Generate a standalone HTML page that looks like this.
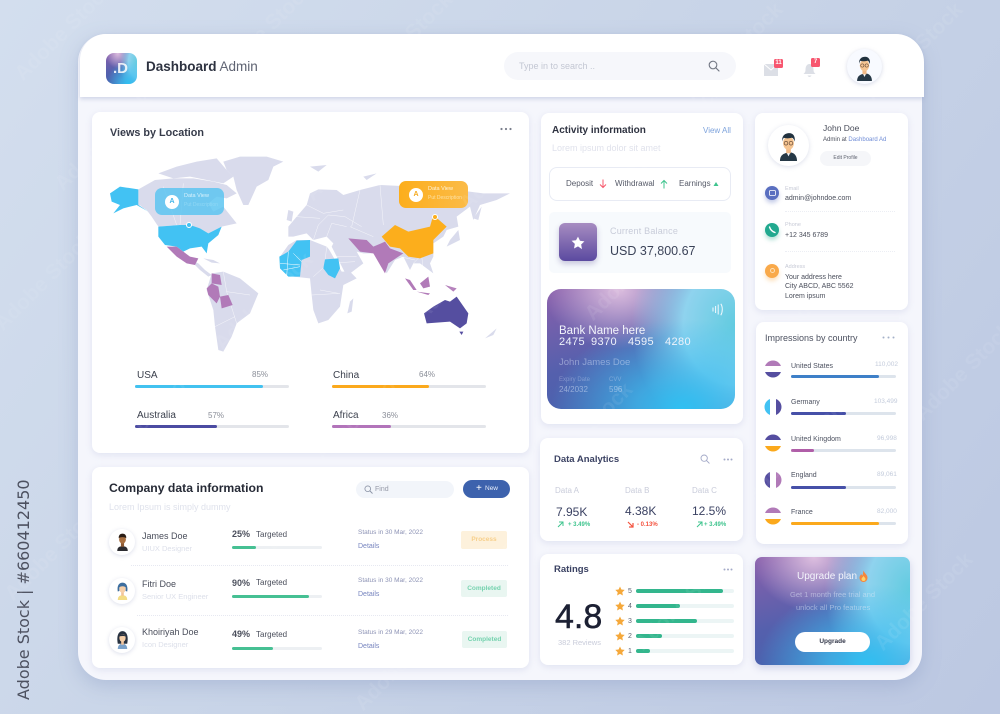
<!DOCTYPE html>
<html><head><meta charset="utf-8"><title>Dashboard Admin</title>
<style>
*{box-sizing:border-box}
html,body{margin:0;padding:0;width:1000px;height:714px;overflow:hidden}
body{position:relative;font-family:"Liberation Sans",sans-serif}
#root{position:absolute;left:0;top:0;width:1000px;height:714px;overflow:hidden;background:linear-gradient(125deg,#d3deee 0%,#c9d5e8 45%,#bcc8e2 100%)}
.a{position:absolute}
.t{position:absolute;white-space:nowrap;line-height:1}
.card{position:absolute;background:#fff;border-radius:8px;box-shadow:0 2px 7px rgba(150,160,205,.22)}
.bar{position:absolute;border-radius:3px}
.g{background:radial-gradient(ellipse 70% 75% at 72% 100%,#2fc0f2 0%,rgba(60,190,240,.75) 35%,rgba(80,180,235,0) 100%),radial-gradient(ellipse 55% 100% at 100% 30%,#62cbe0 0%,#8fd3ee 50%,rgba(130,195,235,0) 100%),radial-gradient(ellipse 40% 50% at 38% 0%,rgba(226,196,226,.95),rgba(226,196,226,0) 100%),linear-gradient(165deg,#8a5fab 0%,#5560ad 50%,#3f63af 100%)}
.wm{position:absolute;color:rgba(255,255,255,.075);font:bold 21px "Liberation Sans",sans-serif;transform:rotate(-45deg);white-space:nowrap}
</style></head><body><div id="root">

<svg width="0" height="0" style="position:absolute"><defs>
<symbol id="man" viewBox="0 0 40 40">
<path d="M9 40c0-8 5-10 11-11s11 3 11 11z" fill="#263846"/><path d="M17 28h6l-3 6z" fill="#f4f6fa"/><rect x="17" y="22" width="6" height="8" fill="#f1b987"/>
<ellipse cx="20" cy="17" rx="7" ry="8.500" fill="#f6c592"/><path d="M12 15c-1-8 4-11 9-11s8 4 7 11c-1-3-2-5-4-5-3 1-8 1-10 0-1 1-2 3-2 5z" fill="#22323f"/>
<circle cx="16.800" cy="17" r="2.400" fill="none" stroke="#5a4030" stroke-width=".8"/><circle cx="23.200" cy="17" r="2.400" fill="none" stroke="#5a4030" stroke-width=".8"/></symbol>
<symbol id="james" viewBox="0 0 40 40">
<path d="M10 38c0-7 4-9 10-9s10 2 10 9z" fill="#2b2b30"/><rect x="17" y="22" width="6" height="8" fill="#8c5a34"/><ellipse cx="20" cy="16" rx="6.500" ry="8" fill="#a86f40"/><path d="M13 14c-1-6 3-9 7-9s8 3 7 9c-2-3-12-3-14 0z" fill="#2a1d15"/></symbol>
<symbol id="fitri" viewBox="0 0 40 40">
<path d="M11 38c0-7 4-9 9-9s9 2 9 9z" fill="#f3dc85"/><rect x="17.500" y="22" width="5" height="8" fill="#f2c49a"/><path d="M11 22c-2-12 3-17 9-17s11 5 9 17l-3-1v-8H14v8z" fill="#3d6e9f"/><ellipse cx="20" cy="17" rx="6" ry="7.500" fill="#f6cfa8"/><path d="M13 15c0-6 4-9 7-9s7 3 7 9c-3-4-11-4-14 0z" fill="#3d6e9f"/></symbol>
<symbol id="khoir" viewBox="0 0 40 40">
<path d="M11 28c-3-16 2-24 9-24s12 8 9 24z" fill="#283240"/><path d="M11 38c0-7 4-10 9-10s9 3 9 10z" fill="#7aa1c9"/><rect x="17.500" y="22" width="5" height="8" fill="#f0c39c"/><ellipse cx="20" cy="17" rx="6" ry="7.500" fill="#f6cfa8"/><path d="M14 14c2-5 8-6 12 0-3-1-8-1-12 0z" fill="#283240"/></symbol>
<symbol id="s" viewBox="0 0 12 12"><circle cx="5" cy="5" r="3.800" fill="none" stroke="currentColor" stroke-width="1.100"/><path d="M8 8l3 3" stroke="currentColor" stroke-width="1.200" stroke-linecap="round"/></symbol>
</defs></svg>

<!-- outer panel -->
<div class="a" style="left:78px;top:34px;width:844px;height:646px;border-radius:28px;background:#f5f6fc;box-shadow:0 6px 18px rgba(130,145,190,.35)"></div>
<!-- header -->
<div class="a" style="left:80px;top:34px;width:844px;height:63px;background:#fff;border-radius:26px 28px 0 0;box-shadow:0 2px 4px rgba(150,160,200,.4)"></div>
<div class="a g" style="left:106px;top:53px;width:31px;height:31px;border-radius:8px"></div>
<div class="t" style="left:113px;top:61px;font-size:15px;font-weight:bold;color:#fff;opacity:.85">.D</div>
<div class="t" style="left:146px;top:60px;font-size:13.500px;color:#3a3f4d"><b style="color:#2d3240">Dashboard</b> <span style="color:#5c6170">Admin</span></div>
<div class="a" style="left:504px;top:52px;width:232px;height:28px;border-radius:14px;background:#f6f7fb"></div>
<div class="t" style="left:519px;top:61.500px;font-size:9px;color:#c3c7d3">Type in to search ..</div>
<svg class="a" style="left:708px;top:60px;color:#6f7480" width="12" height="12"><use href="#s"/></svg>
<svg class="a" style="left:764px;top:63px" width="14" height="14"><path d="M0 1h14v12H0z" fill="#dcdfe6"/><path d="M0 1l7 6 7-6" fill="none" stroke="#fff" stroke-width="1"/></svg>
<div class="a" style="left:774px;top:59px;width:9px;height:9px;background:#f7566f;border-radius:1.500px;color:#fff;font-size:6px;line-height:9px;text-align:center;font-weight:bold">11</div>
<svg class="a" style="left:803px;top:63px" width="13" height="15"><path d="M6.500 1c3 0 4 3 4 6 0 2 1 3 2 4H0.500c1-1 2-2 2-4 0-3 1-6 4-6z" fill="#dcdfe6"/><path d="M4.500 12.500c1 2 3 2 4 0z" fill="#dcdfe6"/></svg>
<div class="a" style="left:811px;top:58px;width:9px;height:9px;background:#f7566f;border-radius:1.500px;color:#fff;font-size:6px;line-height:9px;text-align:center;font-weight:bold">7</div>
<div class="a" style="left:847px;top:49px;width:35px;height:35px;border-radius:50%;background:#f8faff;box-shadow:0 1px 4px rgba(140,150,190,.35)"></div>
<svg class="a" style="left:851px;top:54px" width="27" height="27"><use href="#man"/></svg>

<!-- Views by location -->
<div class="card" style="left:92px;top:112px;width:437px;height:341px"></div>
<div class="t" style="left:110px;top:127.500px;font-size:10.800px;font-weight:bold;color:#363b4a">Views by Location</div>
<svg class="a" style="left:500px;top:127px" width="12" height="4"><circle cx="1.500" cy="2" r="1.100" fill="#7a7f8c"/><circle cx="6" cy="2" r="1.100" fill="#7a7f8c"/><circle cx="10.500" cy="2" r="1.100" fill="#7a7f8c"/></svg>

<svg class="a" style="left:0;top:0" width="1000" height="714">
<g transform="translate(80,30) scale(.33333)">
<g fill="#d9dbec">
<polygon points="430,395 480,380 560,380 610,395 580,410 565,450 530,470 505,525 490,525 470,480 460,440 440,420"/>
<polygon points="235,430 290,410 350,395 410,385 440,420 460,440 430,460 380,450 330,440 280,445"/>
<polygon points="175,478 225,450 280,445 340,445 400,455 440,465 470,490 440,505 410,500 385,520 400,545 430,530 470,580 425,590 385,610 360,595 300,585 235,590 215,560 200,540 175,525"/>
<polygon points="330,690 355,700 375,720 395,735 385,740 360,720"/>
<polygon points="370,685 400,690 420,700 395,698"/>
<polygon points="395,730 430,725 480,745 535,790 510,850 470,880 455,920 430,965 415,960 405,890 400,840 380,780"/>
<polygon points="600,680 625,645 650,630 690,630 740,650 747,658 785,725 810,725 830,745 790,765 780,830 745,870 715,880 700,840 695,795 690,745 640,740 600,715"/>
<polygon points="810,815 820,805 815,845 802,850"/>
<polygon points="625,620 625,590 650,560 680,525 690,490 715,478 770,480 790,495 840,480 900,465 1000,470 1060,480 1130,480 1210,490 1290,490 1250,510 1200,525 1180,570 1170,530 1130,560 1135,590 1100,600 1090,620 1060,640 1060,680 1050,700 1060,730 1020,700 1000,700 990,720 970,680 945,690 920,730 900,690 880,670 850,670 830,665 850,700 800,738 755,650 760,640 740,620 700,630 680,610 640,620"/>
<polygon points="625,540 640,545 635,575 620,570"/>
<polygon points="1110,630 1135,600 1140,630 1100,650"/>
<polygon points="1215,925 1250,895 1240,915"/>
<polygon points="690,410 740,405 715,425"/>
<polygon points="850,440 890,430 860,450"/>
<polygon points="1180,565 1205,530 1195,570"/>
</g>
<g fill="none" stroke="#fff" stroke-width="1.500" opacity=".75">
<path d="M700 630l15-45 30-30 50 5 50 30M740 620l15-40 45 10M650 560l70 5M680 525l50 25 60-10M840 480l-25 110M900 465l10 120M810 590l70 30"/>
<path d="M700 740l45-40 80-5M720 780l55 10M695 795l85-5M740 650l-5 45M430 725l10 60 70 10M405 890l60-30M440 785l30 95M180 525l55 65M300 585l10-125M250 470l40 115"/>
<path d="M1000 700l25-25 5 50M960 680l45 10M770 680l60 0"/>
</g>
<polygon fill="#42c2f3" points="90,490 120,470 175,478 175,525 205,545 170,525 130,535 100,550 120,525 95,515"/>
<polygon fill="#42c2f3" points="235,590 300,585 330,585 360,595 385,610 425,590 415,615 385,640 380,670 365,650 330,655 310,665 290,650 255,645 235,620"/>
<polygon fill="#b17ab8" points="260,650 290,650 310,665 330,680 355,685 345,705 320,700 290,680"/>
<g fill="#b17ab8"><polygon points="395,730 420,735 425,765 395,760"/><polygon points="380,775 395,760 415,770 420,800 410,820 385,795"/><polygon points="420,800 445,795 458,825 425,835"/></g>
<polygon fill="#42c2f3" points="598,680 625,665 650,632 690,630 690,680 665,690 660,740 625,740 600,715"/>
<path d="M600 700l60 5M625 665l-5 75M640 670l25 25M610 720l50-10" fill="none" stroke="#fff" stroke-width="1.500"/>
<polygon fill="#42c2f3" points="735,688 775,685 780,715 765,745 745,735 730,715"/>
<polygon fill="#fcae1c" points="905,620 945,585 985,605 1050,590 1060,555 1100,590 1060,630 1060,670 1020,685 985,680 960,655 930,650"/>
<polygon fill="#b17ab8" points="805,625 860,630 880,650 915,635 930,655 970,670 925,700 915,730 880,670 840,665"/>
<g fill="#b17ab8"><polygon points="975,745 990,750 1010,780 1000,780"/><polygon points="1020,760 1045,740 1050,770 1030,775"/><polygon points="1010,785 1050,790 1045,795"/><polygon points="1095,765 1130,775 1120,785"/></g>
<polygon fill="#554ea0" points="1032,850 1060,830 1095,810 1110,815 1130,800 1165,850 1160,880 1140,895 1110,875 1040,880"/>
<polygon fill="#554ea0" points="1138,905 1150,905 1145,915"/>
</g>
</svg>

<div class="a" style="left:155px;top:188px;width:69px;height:27px;border-radius:7px;background:rgba(88,195,240,.82)"></div>
<div class="a" style="left:165px;top:195px;width:14px;height:14px;border-radius:50%;background:#fff;color:#42b5e8;font-size:7px;font-weight:bold;line-height:14px;text-align:center">A</div>
<div class="t" style="left:184px;top:194px;font-size:5.500px;color:#d8f1fc">Data View</div>
<div class="t" style="left:184px;top:203px;font-size:5px;color:#8fd7f5">Put Description</div>
<div class="a" style="left:186px;top:222px;width:6px;height:6px;border-radius:50%;background:#42c2f3;border:1.500px solid #fff"></div>
<div class="a" style="left:399px;top:181px;width:69px;height:27px;border-radius:7px;background:linear-gradient(90deg,#fcae1c,#fbbb48)"></div>
<div class="a" style="left:409px;top:188px;width:14px;height:14px;border-radius:50%;background:#fff;color:#f5a81c;font-size:7px;font-weight:bold;line-height:14px;text-align:center">A</div>
<div class="t" style="left:428px;top:187px;font-size:5.500px;color:#fff3d8">Data View</div>
<div class="t" style="left:428px;top:196px;font-size:5px;color:#fde0a2">Put Description</div>
<div class="a" style="left:432px;top:214px;width:6px;height:6px;border-radius:50%;background:#fcae1c;border:1.500px solid #fff"></div>

<div class="t" style="left:137px;top:371px;font-size:10px;color:#3a3f4c">USA</div>
<div class="t" style="left:252px;top:371px;font-size:8px;color:#8a8e98">85%</div>
<div class="bar" style="left:135px;top:385px;width:154px;height:3px;background:#e3e5ea"></div><div class="bar" style="left:135px;top:385px;width:128px;height:3px;background:#42c2f0"></div>
<div class="t" style="left:333px;top:371px;font-size:10px;color:#3a3f4c">China</div>
<div class="t" style="left:419px;top:371px;font-size:8px;color:#8a8e98">64%</div>
<div class="bar" style="left:332px;top:385px;width:154px;height:3px;background:#e3e5ea"></div><div class="bar" style="left:332px;top:385px;width:97px;height:3px;background:#fba91c"></div>
<div class="t" style="left:137px;top:411px;font-size:10px;color:#3a3f4c">Australia</div>
<div class="t" style="left:208px;top:412px;font-size:8px;color:#8a8e98">57%</div>
<div class="bar" style="left:135px;top:425px;width:154px;height:3px;background:#e3e5ea"></div><div class="bar" style="left:135px;top:425px;width:82px;height:3px;background:#4b4ba2"></div>
<div class="t" style="left:333px;top:411px;font-size:10px;color:#3a3f4c">Africa</div>
<div class="t" style="left:382px;top:412px;font-size:8px;color:#8a8e98">36%</div>
<div class="bar" style="left:332px;top:425px;width:154px;height:3px;background:#e3e5ea"></div><div class="bar" style="left:332px;top:425px;width:59px;height:3px;background:#b274ba"></div>

<!-- Company -->
<div class="card" style="left:92px;top:467px;width:437px;height:201px"></div>
<div class="t" style="left:109px;top:482px;font-size:12.200px;font-weight:bold;color:#262a36">Company data information</div>
<div class="t" style="left:109px;top:503px;font-size:9px;color:#dfe2ec">Lorem Ipsum is simply dummy</div>
<div class="a" style="left:356px;top:481px;width:98px;height:17px;border-radius:9px;background:#f2f5fa"></div>
<svg class="a" style="left:364px;top:485px;color:#8b93a5" width="9" height="9" viewBox="0 0 12 12"><use href="#s"/></svg>
<div class="t" style="left:375px;top:486px;font-size:7px;color:#969aa8">Find</div>
<div class="a" style="left:463px;top:480px;width:47px;height:18px;border-radius:9px;background:#3d62ad"></div>
<div class="t" style="left:476px;top:483.500px;font-size:10px;color:#fff">+</div>
<div class="t" style="left:485px;top:486px;font-size:6.500px;color:#e8eefa">New</div>

<div class="a" style="left:109px;top:529px;width:26px;height:26px;border-radius:50%;background:#fff;box-shadow:0 1px 4px rgba(140,150,190,.3)"></div>
<svg class="a" style="left:112px;top:531px" width="21" height="21"><use href="#james"/></svg>
<div class="t" style="left:142px;top:531.500px;font-size:9px;color:#4a4e5b">James Doe</div>
<div class="t" style="left:142px;top:544.500px;font-size:7.500px;color:#dde0ea">UIUX Designer</div>
<div class="t" style="left:232px;top:530px;font-size:9px;font-weight:bold;color:#4a4e5b">25%</div>
<div class="t" style="left:256px;top:530.500px;font-size:8px;color:#4a4e5b">Targeted</div>
<div class="bar" style="left:232px;top:546px;width:90px;height:3px;background:#edf0f3"></div><div class="bar" style="left:232px;top:546px;width:24px;height:3px;background:#46c093"></div>
<div class="t" style="left:358px;top:530px;font-size:6.500px;color:#8d93b5">Status in 30 Mar, 2022</div>
<div class="t" style="left:358px;top:542.500px;font-size:7px;color:#7785bf">Details</div>
<div class="a" style="left:461px;top:531px;width:46px;height:18px;border-radius:2px;background:#fdf1dc;color:#f7cf8a;font-size:6.500px;line-height:18px;text-align:center;font-weight:bold">Process</div>
<div class="a" style="left:131px;top:565px;width:377px;border-top:1px dotted #e6e8f1"></div>

<div class="a" style="left:109px;top:578px;width:26px;height:26px;border-radius:50%;background:#fff;box-shadow:0 1px 4px rgba(140,150,190,.3)"></div>
<svg class="a" style="left:112px;top:580px" width="21" height="21"><use href="#fitri"/></svg>
<div class="t" style="left:142px;top:579.500px;font-size:9px;color:#4a4e5b">Fitri Doe</div>
<div class="t" style="left:142px;top:592.500px;font-size:7.500px;color:#dde0ea">Senior UX Engineer</div>
<div class="t" style="left:232px;top:578.500px;font-size:9px;font-weight:bold;color:#4a4e5b">90%</div>
<div class="t" style="left:256px;top:579px;font-size:8px;color:#4a4e5b">Targeted</div>
<div class="bar" style="left:232px;top:595px;width:90px;height:3px;background:#edf0f3"></div><div class="bar" style="left:232px;top:595px;width:77px;height:3px;background:#46c093"></div>
<div class="t" style="left:358px;top:578px;font-size:6.500px;color:#8d93b5">Status in 30 Mar, 2022</div>
<div class="t" style="left:358px;top:590.500px;font-size:7px;color:#7785bf">Details</div>
<div class="a" style="left:461px;top:580px;width:46px;height:17px;border-radius:2px;background:#e9f6f1;color:#74d2ae;font-size:6.500px;line-height:17px;text-align:center;font-weight:bold">Completed</div>
<div class="a" style="left:137px;top:615px;width:371px;border-top:1px dotted #e6e8f1"></div>

<div class="a" style="left:109px;top:627px;width:26px;height:26px;border-radius:50%;background:#fff;box-shadow:0 1px 4px rgba(140,150,190,.3)"></div>
<svg class="a" style="left:112px;top:629px" width="21" height="21"><use href="#khoir"/></svg>
<div class="t" style="left:142px;top:628px;font-size:9px;color:#4a4e5b">Khoiriyah Doe</div>
<div class="t" style="left:142px;top:641px;font-size:7.500px;color:#dde0ea">Icon Designer</div>
<div class="t" style="left:232px;top:630px;font-size:9px;font-weight:bold;color:#4a4e5b">49%</div>
<div class="t" style="left:256px;top:630.500px;font-size:8px;color:#4a4e5b">Targeted</div>
<div class="bar" style="left:232px;top:647px;width:90px;height:3px;background:#edf0f3"></div><div class="bar" style="left:232px;top:647px;width:41px;height:3px;background:#46c093"></div>
<div class="t" style="left:358px;top:630px;font-size:6.500px;color:#8d93b5">Status in 29 Mar, 2022</div>
<div class="t" style="left:358px;top:642.500px;font-size:7px;color:#7785bf">Details</div>
<div class="a" style="left:462px;top:631px;width:45px;height:17px;border-radius:2px;background:#e9f6f1;color:#74d2ae;font-size:6.500px;line-height:17px;text-align:center;font-weight:bold">Completed</div>

<!-- Activity -->
<div class="card" style="left:541px;top:113px;width:202px;height:311px"></div>
<div class="t" style="left:552px;top:126px;font-size:10px;font-weight:bold;color:#2e3240">Activity information</div>
<div class="t" style="left:703px;top:127px;font-size:8px;color:#7ea3dc">View All</div>
<div class="t" style="left:552px;top:144px;font-size:9px;color:#e0e2ec">Lorem ipsum dolor sit amet</div>
<div class="a" style="left:549px;top:167px;width:182px;height:34px;border-radius:8px;border:1px solid #e8ebf4;background:#fff"></div>
<div class="t" style="left:566px;top:180px;font-size:8px;color:#565a68">Deposit</div>
<svg class="a" style="left:599px;top:179px" width="8" height="10"><path d="M4 .5v8M1 5.500l3 3 3-3" fill="none" stroke="#f7586c" stroke-width="1"/></svg>
<div class="t" style="left:615px;top:180px;font-size:8px;color:#565a68">Withdrawal</div>
<svg class="a" style="left:660px;top:179px" width="8" height="10"><path d="M4 9.500v-8M1 4.500l3-3 3 3" fill="none" stroke="#3fc48e" stroke-width="1"/></svg>
<div class="t" style="left:679px;top:180px;font-size:8px;color:#565a68">Earnings</div>
<svg class="a" style="left:713px;top:181px" width="6" height="6"><path d="M3 1l2.500 4h-5z" fill="#3fc48e"/></svg>
<div class="a" style="left:549px;top:212px;width:182px;height:61px;border-radius:5px;background:#f7fafd"></div>
<div class="a" style="left:559px;top:223px;width:38px;height:38px;border-radius:6px;background:linear-gradient(180deg,#a78cc1,#5b4aa0);box-shadow:0 3px 6px rgba(90,80,150,.3)"></div>
<svg class="a" style="left:571px;top:236px" width="14" height="14" viewBox="0 0 24 24"><path d="M12 1l3.400 7.200 7.600 1-5.600 5.400 1.400 7.800L12 17.700l-6.800 3.700 1.400-7.800L1 8.200l7.600-1z" fill="#fff"/></svg>
<div class="t" style="left:610px;top:226.500px;font-size:9px;color:#c8ccd9;letter-spacing:.2px">Current Balance</div>
<div class="t" style="left:610px;top:245px;font-size:12.500px;color:#3a4258">USD 37,800.67</div>

<div class="a g" style="left:547px;top:289px;width:188px;height:120px;border-radius:14px"></div>
<svg class="a" style="left:712px;top:303px" width="12" height="13"><path d="M1 4.500v4M3.600 3v7M6.200 1.500v10M8.800 .8c2 3 2 8 0 11.400" fill="none" stroke="#f2f8fd" stroke-width="1"/></svg>
<div class="t" style="left:559px;top:325.500px;font-size:11.500px;color:#f2f4fb">Bank Name here</div>
<div class="t" style="left:559px;top:337px;font-size:11px;color:#eef3fb;letter-spacing:.4px">2475</div>
<div class="t" style="left:591px;top:337px;font-size:11px;color:#eef3fb;letter-spacing:.4px">9370</div>
<div class="t" style="left:628px;top:337px;font-size:11px;color:#eef3fb;letter-spacing:.4px">4595</div>
<div class="t" style="left:665px;top:337px;font-size:11px;color:#eef3fb;letter-spacing:.4px">4280</div>
<div class="t" style="left:559px;top:358px;font-size:9.500px;color:rgba(220,230,250,.45)">John James Doe</div>
<div class="t" style="left:559px;top:377px;font-size:6px;color:rgba(220,230,250,.35)">Expiry Date</div>
<div class="t" style="left:609px;top:377px;font-size:6px;color:rgba(220,230,250,.35)">CVV</div>
<div class="t" style="left:559px;top:386px;font-size:8px;color:rgba(220,230,250,.5)">24/2032</div>
<div class="t" style="left:609px;top:386px;font-size:8px;color:rgba(220,230,250,.5)">596</div>

<!-- Data analytics -->
<div class="card" style="left:540px;top:438px;width:203px;height:103px"></div>
<div class="t" style="left:554px;top:455px;font-size:9.500px;font-weight:bold;color:#3a4162">Data Analytics</div>
<svg class="a" style="left:700px;top:454px;color:#a4aac8" width="10" height="10" viewBox="0 0 12 12"><use href="#s"/></svg>
<svg class="a" style="left:723px;top:458px" width="10" height="3"><circle cx="1.500" cy="1.500" r="1" fill="#a4aac8"/><circle cx="5" cy="1.500" r="1" fill="#a4aac8"/><circle cx="8.500" cy="1.500" r="1" fill="#a4aac8"/></svg>
<div class="t" style="left:555px;top:487px;font-size:8px;color:#c9ccda">Data A</div>
<div class="t" style="left:625px;top:487px;font-size:8px;color:#c9ccda">Data B</div>
<div class="t" style="left:692px;top:487px;font-size:8px;color:#c9ccda">Data C</div>
<div class="t" style="left:556px;top:506px;font-size:12px;color:#3a4162">7.95K</div>
<div class="t" style="left:625px;top:505px;font-size:12px;color:#3a4162">4.38K</div>
<div class="t" style="left:692px;top:505px;font-size:12px;color:#3a4162">12.5%</div>
<svg class="a" style="left:557px;top:521px" width="7" height="7"><path d="M1 6l5-5M2 1h4v4" fill="none" stroke="#3fc48e" stroke-width="1"/></svg>
<div class="t" style="left:568px;top:522px;font-size:6px;color:#3fc48e;font-weight:bold">+ 3.49%</div>
<svg class="a" style="left:627px;top:521px" width="7" height="7"><path d="M1 1l5 5M6 2v4H2" fill="none" stroke="#f4523e" stroke-width="1.200"/></svg>
<div class="t" style="left:637px;top:522px;font-size:6px;color:#f4523e;font-weight:bold">- 0.13%</div>
<svg class="a" style="left:696px;top:521px" width="7" height="7"><path d="M1 6l5-5M2 1h4v4" fill="none" stroke="#3fc48e" stroke-width="1"/></svg>
<div class="t" style="left:704px;top:522px;font-size:6px;color:#3fc48e;font-weight:bold">+ 3.49%</div>

<!-- Ratings -->
<div class="card" style="left:540px;top:554px;width:203px;height:111px"></div>
<div class="t" style="left:554px;top:565px;font-size:9.500px;font-weight:bold;color:#3a4162">Ratings</div>
<svg class="a" style="left:723px;top:568px" width="10" height="3"><circle cx="1.500" cy="1.500" r="1" fill="#a4aac8"/><circle cx="5" cy="1.500" r="1" fill="#a4aac8"/><circle cx="8.500" cy="1.500" r="1" fill="#a4aac8"/></svg>
<div class="t" style="left:555px;top:600px;font-size:34px;color:#1c2033;-webkit-text-stroke:.5px #1c2033">4.8</div>
<div class="t" style="left:558px;top:639px;font-size:7.500px;color:#c9ccda">382 Reviews</div>
<svg class="a" style="left:614px;top:585px" width="12" height="72" viewBox="0 0 12 72"><g fill="#f5a83a"><path d="M6 1.500l1.400 3 3.300.4-2.400 2.300.6 3.300-2.900-1.600-2.900 1.600.6-3.300L1.300 4.900l3.300-.4z"/><path transform="translate(0,15)" d="M6 1.500l1.400 3 3.300.4-2.400 2.300.6 3.300-2.900-1.600-2.900 1.600.6-3.300L1.300 4.900l3.300-.4z"/><path transform="translate(0,30)" d="M6 1.500l1.400 3 3.300.4-2.400 2.300.6 3.300-2.900-1.600-2.900 1.600.6-3.300L1.300 4.900l3.300-.4z"/><path transform="translate(0,45)" d="M6 1.500l1.400 3 3.300.4-2.400 2.300.6 3.300-2.900-1.600-2.900 1.600.6-3.300L1.300 4.900l3.300-.4z"/><path transform="translate(0,60)" d="M6 1.500l1.400 3 3.300.4-2.400 2.300.6 3.300-2.900-1.600-2.900 1.600.6-3.300L1.300 4.900l3.300-.4z"/></g></svg>
<div class="t" style="left:628px;top:587.500px;font-size:7px;color:#5d6170">5</div>
<div class="t" style="left:628px;top:602.500px;font-size:7px;color:#5d6170">4</div>
<div class="t" style="left:628px;top:617.500px;font-size:7px;color:#5d6170">3</div>
<div class="t" style="left:628px;top:632.500px;font-size:7px;color:#5d6170">2</div>
<div class="t" style="left:628px;top:647.500px;font-size:7px;color:#5d6170">1</div>
<div class="bar" style="left:636px;top:589px;width:98px;height:4px;background:#ecf5f5"></div><div class="bar" style="left:636px;top:589px;width:87px;height:4px;background:#33b68d"></div>
<div class="bar" style="left:636px;top:604px;width:98px;height:4px;background:#ecf5f5"></div><div class="bar" style="left:636px;top:604px;width:44px;height:4px;background:#33b68d"></div>
<div class="bar" style="left:636px;top:619px;width:98px;height:4px;background:#ecf5f5"></div><div class="bar" style="left:636px;top:619px;width:61px;height:4px;background:#33b68d"></div>
<div class="bar" style="left:636px;top:634px;width:98px;height:4px;background:#ecf5f5"></div><div class="bar" style="left:636px;top:634px;width:26px;height:4px;background:#33b68d"></div>
<div class="bar" style="left:636px;top:649px;width:98px;height:4px;background:#ecf5f5"></div><div class="bar" style="left:636px;top:649px;width:14px;height:4px;background:#33b68d"></div>

<!-- Profile -->
<div class="card" style="left:755px;top:113px;width:153px;height:197px"></div>
<div class="a" style="left:768px;top:125px;width:41px;height:41px;border-radius:50%;background:#fff;box-shadow:0 1px 5px rgba(140,150,190,.3)"></div>
<svg class="a" style="left:773px;top:130px" width="31" height="31"><use href="#man"/></svg>
<div class="t" style="left:823px;top:123.500px;font-size:8.500px;color:#4a4e5b">John Doe</div>
<div class="t" style="left:823px;top:136.500px;font-size:6px;color:#4a4e5b">Admin at <span style="color:#6f8cd6">Dashboard Ad</span></div>
<div class="a" style="left:820px;top:151px;width:51px;height:15px;border-radius:8px;background:#f5f6f9;color:#5f6370;font-size:5px;line-height:15px;text-align:center">Edit Profile</div>

<div class="a" style="left:765px;top:186px;width:14px;height:14px;border-radius:50%;background:#5a6fc0;box-shadow:0 3px 4px rgba(90,110,190,.35)"></div>
<svg class="a" style="left:768.500px;top:190px" width="7" height="6"><rect x=".5" y=".5" width="6" height="5" rx="1" fill="none" stroke="#fff" stroke-width=".8"/></svg>
<div class="t" style="left:785px;top:186.500px;font-size:5.500px;color:#c7cad6">Email</div>
<div class="t" style="left:785px;top:194.500px;font-size:7px;color:#4a4e5b">admin@johndoe.com</div>
<div class="a" style="left:785px;top:211px;width:110px;border-top:1px dotted #eceef4"></div>
<div class="a" style="left:765px;top:223px;width:14px;height:14px;border-radius:50%;background:#22a98f;box-shadow:0 3px 4px rgba(40,170,140,.35)"></div>
<svg class="a" style="left:768px;top:226px" width="8" height="8"><path d="M1.500 1c1 3 2.500 4.500 5.500 5.500" fill="none" stroke="#fff" stroke-width="1.400" stroke-linecap="round"/></svg>
<div class="t" style="left:785px;top:223px;font-size:5.500px;color:#c7cad6">Phone</div>
<div class="t" style="left:785px;top:231.500px;font-size:7px;color:#4a4e5b">+12 345 6789</div>
<div class="a" style="left:785px;top:251px;width:110px;border-top:1px dotted #eceef4"></div>
<div class="a" style="left:765px;top:264px;width:14px;height:14px;border-radius:50%;background:#f9a94a;box-shadow:0 3px 4px rgba(250,170,70,.35)"></div>
<div class="a" style="left:769.500px;top:268px;width:5px;height:5px;border-radius:50%;border:1px solid #fde1b8"></div>
<div class="t" style="left:785px;top:264.500px;font-size:5.500px;color:#c7cad6">Address</div>
<div class="t" style="left:785px;top:273.500px;font-size:7px;color:#4a4e5b">Your address here</div>
<div class="t" style="left:785px;top:283px;font-size:7px;color:#4a4e5b">City ABCD, ABC 5562</div>
<div class="t" style="left:785px;top:292.500px;font-size:7px;color:#4a4e5b">Lorem ipsum</div>

<!-- Impressions -->
<div class="card" style="left:756px;top:322px;width:152px;height:222px"></div>
<div class="t" style="left:765px;top:333.500px;font-size:9px;color:#4c5160">Impressions by country</div>
<svg class="a" style="left:882px;top:336px" width="13" height="3"><circle cx="1.500" cy="1.500" r="1" fill="#a4b0c8"/><circle cx="6.500" cy="1.500" r="1" fill="#a4b0c8"/><circle cx="11.500" cy="1.500" r="1" fill="#a4b0c8"/></svg>

<svg class="a" style="left:764px;top:360px" width="18" height="18"><defs><clipPath id="c"><circle cx="9" cy="9" r="8.500"/></clipPath></defs><g clip-path="url(#c)"><rect width="18" height="18" fill="#fff"/><rect width="18" height="6" fill="#b17ab8"/><rect y="12" width="18" height="6" fill="#554ea0"/></g></svg>
<svg class="a" style="left:764px;top:398px" width="18" height="18"><g clip-path="url(#c)"><rect width="18" height="18" fill="#fff"/><rect width="6" height="18" fill="#42c2f3"/><rect x="12" width="6" height="18" fill="#554ea0"/></g></svg>
<svg class="a" style="left:764px;top:434px" width="18" height="18"><g clip-path="url(#c)"><rect width="18" height="18" fill="#fff"/><rect width="18" height="6" fill="#554ea0"/><rect y="12" width="18" height="6" fill="#fba91c"/></g></svg>
<svg class="a" style="left:764px;top:471px" width="18" height="18"><g clip-path="url(#c)"><rect width="18" height="18" fill="#fff"/><rect width="6" height="18" fill="#554ea0"/><rect x="12" width="6" height="18" fill="#b17ab8"/></g></svg>
<svg class="a" style="left:764px;top:507px" width="18" height="18"><g clip-path="url(#c)"><rect width="18" height="18" fill="#fff"/><rect width="18" height="6" fill="#b17ab8"/><rect y="12" width="18" height="6" fill="#fba91c"/></g></svg>

<div class="t" style="left:791px;top:362.500px;font-size:7px;color:#4c5160">United States</div>
<div class="t" style="left:875px;top:362px;font-size:6.500px;color:#c3cbdb">110,002</div>
<div class="bar" style="left:791px;top:375px;width:105px;height:3px;background:#dde4ec"></div><div class="bar" style="left:791px;top:375px;width:88px;height:3px;background:#3e80c8"></div>
<div class="t" style="left:791px;top:399px;font-size:7px;color:#4c5160">Germany</div>
<div class="t" style="left:874px;top:399px;font-size:6.500px;color:#c3cbdb">103,499</div>
<div class="bar" style="left:791px;top:412px;width:105px;height:3px;background:#dde4ec"></div><div class="bar" style="left:791px;top:412px;width:55px;height:3px;background:#4650a8"></div>
<div class="t" style="left:791px;top:435.500px;font-size:7px;color:#4c5160">United Kingdom</div>
<div class="t" style="left:877px;top:435.500px;font-size:6.500px;color:#c3cbdb">96,998</div>
<div class="bar" style="left:791px;top:449px;width:105px;height:3px;background:#dde4ec"></div><div class="bar" style="left:791px;top:449px;width:23px;height:3px;background:#b05ea8"></div>
<div class="t" style="left:791px;top:472px;font-size:7px;color:#4c5160">England</div>
<div class="t" style="left:877px;top:472px;font-size:6.500px;color:#c3cbdb">89,061</div>
<div class="bar" style="left:791px;top:486px;width:105px;height:3px;background:#dde4ec"></div><div class="bar" style="left:791px;top:486px;width:55px;height:3px;background:#4650a8"></div>
<div class="t" style="left:791px;top:509px;font-size:7px;color:#4c5160">France</div>
<div class="t" style="left:877px;top:509px;font-size:6.500px;color:#c3cbdb">82,000</div>
<div class="bar" style="left:791px;top:522px;width:105px;height:3px;background:#dde4ec"></div><div class="bar" style="left:791px;top:522px;width:88px;height:3px;background:#fba91c"></div>

<!-- Upgrade -->
<div class="a g" style="left:755px;top:557px;width:155px;height:108px;border-radius:7px;box-shadow:0 3px 8px rgba(120,130,190,.3)"></div>
<div class="t" style="left:797px;top:571.500px;font-size:10px;color:#f3f4fb">Upgrade plan</div>
<svg class="a" style="left:859px;top:570px" width="9" height="12"><path d="M4.500 .5c1 3 4 4 4 7.500a4 4 0 0 1-8 0c0-2 1-3 2-4 0 1 .5 1.500 1 1.500 .5-1.500.5-3 1-5z" fill="#f6873c"/><path d="M4.500 6c.5 1 2 2 2 3a2 2 0 0 1-4 0c0-1 1.500-2 2-3z" fill="#fcd36a"/></svg>
<div class="t" style="left:790px;top:591px;font-size:7.500px;color:rgba(230,235,250,.5)">Get 1 month free trial and</div>
<div class="t" style="left:796px;top:604px;font-size:7.500px;color:rgba(230,235,250,.5)">unlock all Pro features</div>
<div class="a" style="left:795px;top:632px;width:75px;height:20px;border-radius:10px;background:#fff;color:#33384a;font-size:6.500px;font-weight:bold;line-height:20px;text-align:center">Upgrade</div>

<!-- Adobe Stock side label -->
<div class="t" style="left:14px;top:700px;font:16px 'DejaVu Sans',sans-serif;color:#4d5160;transform-origin:0 0;transform:rotate(-90deg)">Adobe Stock | #660412450</div>

<!-- watermarks -->
<div class="wm" style="left:0px;top:20px">Adobe Stock</div>
<div class="wm" style="left:200px;top:20px">Adobe Stock</div>
<div class="wm" style="left:340px;top:30px">Adobe Stock</div>
<div class="wm" style="left:670px;top:40px">Adobe Stock</div>
<div class="wm" style="left:850px;top:40px">Adobe Stock</div>
<div class="wm" style="left:40px;top:130px">Adobe Stock</div>
<div class="wm" style="left:290px;top:140px">Adobe Stock</div>
<div class="wm" style="left:445px;top:150px">Adobe Stock</div>
<div class="wm" style="left:610px;top:120px">Adobe Stock</div>
<div class="wm" style="left:810px;top:170px">Adobe Stock</div>
<div class="wm" style="left:-20px;top:270px">Adobe Stock</div>
<div class="wm" style="left:200px;top:290px">Adobe Stock</div>
<div class="wm" style="left:400px;top:260px">Adobe Stock</div>
<div class="wm" style="left:570px;top:260px">Adobe Stock</div>
<div class="wm" style="left:770px;top:270px">Adobe Stock</div>
<div class="wm" style="left:90px;top:400px">Adobe Stock</div>
<div class="wm" style="left:300px;top:400px">Adobe Stock</div>
<div class="wm" style="left:520px;top:420px">Adobe Stock</div>
<div class="wm" style="left:730px;top:440px">Adobe Stock</div>
<div class="wm" style="left:900px;top:360px">Adobe Stock</div>
<div class="wm" style="left:-10px;top:540px">Adobe Stock</div>
<div class="wm" style="left:190px;top:550px">Adobe Stock</div>
<div class="wm" style="left:420px;top:560px">Adobe Stock</div>
<div class="wm" style="left:620px;top:590px">Adobe Stock</div>
<div class="wm" style="left:860px;top:590px">Adobe Stock</div>
<div class="wm" style="left:340px;top:650px">Adobe Stock</div>
</div></body></html>
